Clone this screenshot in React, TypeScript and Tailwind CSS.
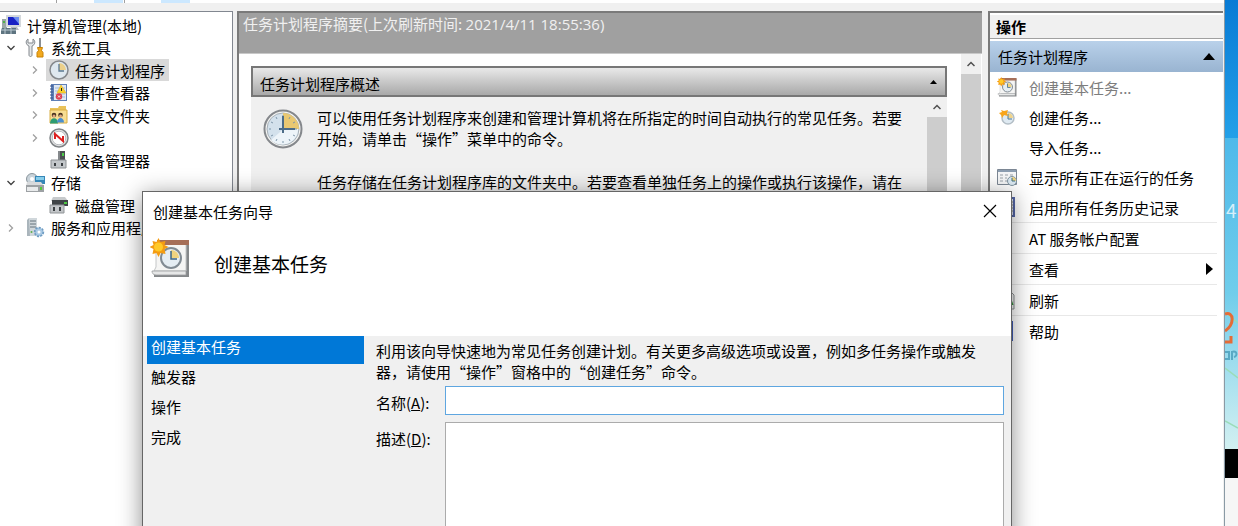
import { clsx } from "clsx";
import type { ReactNode } from "react";

function ComputerIcon() {
  return (
    <svg className="h-5 w-5" viewBox="0 0 20 20">
      <path d="M1 4h5v9H1z" fill="#9aa7a6" />
      <path d="M2 6h2v2H2z" fill="#4fb04a" />
      <path d="M5 0h15v12H5z" fill="#d4d8dc" />
      <path d="M7 2h11v8H7z" fill="#1a22c4" />
      <path d="M12 2h6v7z" fill="#6c8df0" />
      <path d="M10 12h6l2 3H9z" fill="#b9bcc0" />
      <path d="M1 13h14v6H0v-4z" fill="#5e7480" />
      <path d="M0 15h15M4 13v6M10 13v6" stroke="#bccad2" />
    </svg>
  );
}

function ToolsIcon() {
  return (
    <svg className="h-5 w-5" viewBox="0 0 20 20">
      <path d="M3 1C0 3 1 7 4 8v9c0 2 3 2 3 0V8c3-1 4-5 1-7v4H3z" fill="#e4e7e9" stroke="#84898e" />
      <path d="M14 0h2v10h-2z" fill="#8a8f93" />
      <path d="M12.500 9.500h5l-1 3 1.500 2v4.500h-6v-4.500l1.500-2z" fill="#f2a91e" stroke="#c98204" />
    </svg>
  );
}

function ClockIcon({ className = "h-5 w-5" }: { className?: string }) {
  return (
    <svg className={className} viewBox="0 0 40 40">
      <circle cx="20" cy="20" r="18.5" fill="#f4f4f2" stroke="#85888c" strokeWidth="2" />
      <circle cx="20" cy="20" r="16" fill="#d3e1ec" stroke="#a8b0b7" />
      <path d="M8 31a16 16 0 0 0 24-21z" fill="#edf4f9" />
      <path d="M20 20V4a16 16 0 0 1 16 16z" fill="#e9c872" />
      <path
        d="M20 6v2M6 20h2M20 34v-2M34 20h-2M13 8l1 2M27 8l-1 2M8 13l2 1M32 13l-2 1M8 27l2-1M32 27l-2-1M13 32l1-2M27 32l-1-2"
        stroke="#7f97aa"
      />
      <path d="M20 7v17M16 20h16" stroke="#4c6c88" strokeWidth="2" />
    </svg>
  );
}

function SmallClockIcon() {
  return (
    <svg className="h-5 w-5" viewBox="0 0 20 20">
      <circle cx="10" cy="10" r="9" fill="#dfe8ef" stroke="#85888c" strokeWidth="1.5" />
      <path d="M10 10V3a7 7 0 0 1 7 7z" fill="#ecd08a" />
      <path d="M10 4v7h5" fill="none" stroke="#5b7890" strokeWidth="1.3" />
    </svg>
  );
}

function EventIcon() {
  return (
    <svg className="h-5 w-5" viewBox="0 0 20 20">
      <path d="M2 1h16v17H2z" fill="#5d7fb6" />
      <path d="M5 2h12v15H5z" fill="#dfe8f4" />
      <path d="M6 5h10M6 8h10M6 11h10M6 14h10" stroke="#a5b9d6" />
      <path d="M1 3h3M1 6h3M1 9h3M1 12h3M1 15h3" stroke="#37538a" />
      <path d="m12 2 5 8H8z" fill="#fbd32b" stroke="#e0b020" strokeWidth="0.6" />
      <path d="M12.500 5v3" stroke="#222" />
      <circle cx="10" cy="13.5" r="3.2" fill="#dd4050" />
      <path d="m9 12.500 2 2m0-2-2 2" stroke="#fff" strokeWidth="0.9" />
    </svg>
  );
}

function SharedIcon() {
  return (
    <svg className="h-5 w-5" viewBox="0 0 20 20">
      <path d="M1 3h8l1-2h7v15H1z" fill="#e9c25a" />
      <path d="M1 5h17v13H1z" fill="#f7dd92" stroke="#d9ae45" />
      <circle cx="5" cy="10" r="2.3" fill="#4a3320" />
      <circle cx="11.5" cy="10" r="2.3" fill="#4a3320" />
      <circle cx="5" cy="11" r="1.5" fill="#dca77f" />
      <circle cx="11.5" cy="11" r="1.5" fill="#dca77f" />
      <path d="M1 18.500c0-7 8-7 8 0z" fill="#2d9c72" />
      <path d="M8 17.500c0-6 7-6 7 0z" fill="#4a8fd0" />
    </svg>
  );
}

function PerformanceIcon() {
  return (
    <svg className="h-5 w-5" viewBox="0 0 20 20">
      <circle cx="10" cy="10" r="9" fill="#e6e6e6" stroke="#7f8386" strokeWidth="1.5" />
      <circle cx="10" cy="10" r="6.8" fill="#fff" stroke="#b7bbbe" />
      <path d="M6 11V6l8 7V8" fill="none" stroke="#dd2020" strokeWidth="2" />
    </svg>
  );
}

function DeviceIcon() {
  return (
    <svg className="h-5 w-5" viewBox="0 0 20 20">
      <path d="M9 1h7v11H9z" fill="#4b4f52" />
      <path d="M13 3h2v3h-2z" fill="#4ecb4a" />
      <path d="M2 10h15v8H2z" fill="#c3c7ca" stroke="#8d9194" />
      <path d="M5 13h2v3H5zM12 13h2v3h-2z" fill="#3b3f42" />
      <path d="M9 1h2v9H9z" fill="#85898c" />
    </svg>
  );
}

function StorageIcon() {
  return (
    <svg className="h-5 w-5" viewBox="0 0 20 20">
      <circle cx="7" cy="6" r="5.5" fill="#c9d3da" stroke="#8b969d" />
      <circle cx="7" cy="6" r="2" fill="#fff" />
      <path d="M10 3h10v8H10z" fill="#3687b8" />
      <path d="M11 4h8v3h-8z" fill="#87cdea" />
      <path d="M2 9h14l3 4H1z" fill="#d8dadc" />
      <path d="M1 12h18v7H1z" fill="#9da1a4" />
      <path d="M2 14h11v4H2z" fill="#e8eaeb" />
      <path d="M15 14h2v3h-2z" fill="#55cc39" />
    </svg>
  );
}

function DiskIcon() {
  return (
    <svg className="h-5 w-5" viewBox="0 0 20 20">
      <path d="M4 2h12l3 4H2z" fill="#c7cacc" />
      <path d="M3 5h16v6H3z" fill="#3f4346" />
      <path d="M15 7h3v2h-3z" fill="#4ec944" />
      <path d="M1 10h14v8H1z" fill="#c2c5c8" stroke="#909497" />
      <path d="M4 12h2v4H4zM10 12h2v4h-2z" fill="#3c4043" />
    </svg>
  );
}

function ServicesIcon() {
  return (
    <svg className="h-5 w-5" viewBox="0 0 20 20">
      <path d="M4 0h8v18H2V2z" fill="#aab5bc" />
      <path d="M4 0h8v18H5z" fill="#d0d7db" />
      <path d="M5 3h6M5 6h6M5 9h6" stroke="#65737d" />
      <circle cx="6.5" cy="14" r="1" fill="#5cae4c" />
      <circle cx="14" cy="14" r="4" fill="#9fc3e2" stroke="#6f9cc2" strokeWidth="2.400" strokeDasharray="2 1" />
      <circle cx="14" cy="14" r="3.4" fill="#a9c9e4" />
      <circle cx="14" cy="14" r="1.5" fill="#fff" />
    </svg>
  );
}

function BasicTaskIcon({ className = "h-5 w-5" }: { className?: string }) {
  return (
    <svg className={className} viewBox="0 0 40 40">
      <path d="M8 3h31v36H4v-4h4z" fill="#85888a" />
      <path d="M6 6h30v27H4l2-4z" fill="#f5f5f4" stroke="#c4c6c7" />
      <path d="M7 2h32v5H7z" fill="#a66f58" />
      <path d="M2 33h34v4H6c-3 0-4-2-4-4z" fill="#e6e7e7" stroke="#9b9d9e" strokeWidth="0.8" />
      <circle cx="21" cy="20" r="10" fill="#e5edf3" stroke="#818b93" strokeWidth="2" />
      <path d="M21 20v-8a8 8 0 0 1 8 8z" fill="#efd37f" />
      <path d="M21 13v8h6" fill="none" stroke="#3c6585" strokeWidth="1.5" />
      <path d="m8.500 0 2 4 5-1-1 4 4 2-4 2 1 5-5-1-2 4-2-4-4 1 1-5-4-2 4-2-1-4 4 1z" fill="#f49c12" />
      <circle cx="8.500" cy="9" r="4.5" fill="#ffc928" />
    </svg>
  );
}

function NewTaskIcon() {
  return (
    <svg className="h-5 w-5" viewBox="0 0 20 20">
      <circle cx="11" cy="11" r="6" fill="#dfeaf2" stroke="#b3bec6" strokeWidth="1.5" />
      <path d="M11 11V6a5 5 0 0 1 5 5z" fill="#f0d48c" />
      <path d="M11 7v5h4" fill="none" stroke="#4c7899" />
      <path d="m4 3 3 1 4-1-1 3 1 3-4-1-2 3-1-3-2-2 3-1z" fill="#f8a51b" />
    </svg>
  );
}

function RunningIcon() {
  return (
    <svg className="h-5 w-5" viewBox="0 0 20 20">
      <path d="M.5 2.500h19v15H.5z" fill="#f5f6f7" stroke="#7c8794" />
      <path d="M1 3h18v2H1z" fill="#8c9db0" />
      <path d="M3 8h3m2 0h3m2 0h3M3 11h3m2 0h2M3 14h3m2 0h2" stroke="#9aa1a8" />
      <circle cx="15" cy="14" r="4.5" fill="#dbe9f2" stroke="#7f939f" />
      <path d="M15 14v-4a4 4 0 0 1 4 4z" fill="#efd37f" />
      <path d="M15 11v3h3" fill="none" stroke="#3c7184" />
    </svg>
  );
}

function HistoryIcon() {
  return (
    <svg className="h-5 w-5" viewBox="0 0 20 20">
      <path d="M1 1h16v18H1z" fill="#d9dff0" stroke="#5365a5" strokeWidth="2" />
      <path d="M4 5h12M4 8h12M4 11h12M4 14h12" stroke="#8c846f" />
    </svg>
  );
}

function RefreshIcon() {
  return (
    <svg className="h-5 w-5" viewBox="0 0 20 20">
      <path d="M1 1h12l4 4v14H1z" fill="#f5f5f5" stroke="#8d9192" />
      <path d="M5 9a5 5 0 0 1 8-2l2-1v5h-5l1-2M14 12a5 5 0 0 1-8 3l-2 1v-5h5" fill="#3a9e37" />
      <path d="m14 8 2.500 7h-3z" fill="#2f9437" />
    </svg>
  );
}

function HelpIcon() {
  return (
    <svg className="h-5 w-5" viewBox="0 0 20 20">
      <path d="M1 0h15v20H1z" fill="#3f5cb8" />
      <text x="5" y="15" fill="#fff" fontSize="14">?</text>
    </svg>
  );
}

type TreeNode = {
  label: string;
  level: 0 | 1 | 2;
  icon: ReactNode;
  state?: "open" | "closed";
  selected?: boolean;
};

const tree: TreeNode[] = [
  { label: "计算机管理(本地)", level: 0, icon: <ComputerIcon /> },
  { label: "系统工具", level: 1, icon: <ToolsIcon />, state: "open" },
  { label: "任务计划程序", level: 2, icon: <SmallClockIcon />, state: "closed", selected: true },
  { label: "事件查看器", level: 2, icon: <EventIcon />, state: "closed" },
  { label: "共享文件夹", level: 2, icon: <SharedIcon />, state: "closed" },
  { label: "性能", level: 2, icon: <PerformanceIcon />, state: "closed" },
  { label: "设备管理器", level: 2, icon: <DeviceIcon /> },
  { label: "存储", level: 1, icon: <StorageIcon />, state: "open" },
  { label: "磁盘管理", level: 2, icon: <DiskIcon /> },
  { label: "服务和应用程序", level: 1, icon: <ServicesIcon />, state: "closed" },
];

const actions: { label: string; icon?: ReactNode; disabled?: boolean; divided?: boolean; submenu?: boolean }[] = [
  { label: "创建基本任务...", icon: <BasicTaskIcon />, disabled: true },
  { label: "创建任务...", icon: <NewTaskIcon /> },
  { label: "导入任务..." },
  { label: "显示所有正在运行的任务", icon: <RunningIcon /> },
  { label: "启用所有任务历史记录", icon: <HistoryIcon /> },
  { label: "AT 服务帐户配置", divided: true },
  { label: "查看", divided: true, submenu: true },
  { label: "刷新", icon: <RefreshIcon />, divided: true },
  { label: "帮助", icon: <HelpIcon />, divided: true },
];

const steps = ["创建基本任务", "触发器", "操作", "完成"];

function Expander({ state }: { state?: "open" | "closed" }) {
  return (
    <span className="flex w-[22px] shrink-0 justify-center">
      {state ? (
        <svg className="h-2.5 w-2.5" viewBox="0 0 10 10" fill="none" strokeWidth="1.3">
          {state === "open" ? <path d="m1.500 3 3.500 3.500L8.500 3" stroke="#404040" /> : <path d="M3 1.500 6.500 5 3 8.500" stroke="#a0a0a0" />}
        </svg>
      ) : null}
    </span>
  );
}

function TreePane() {
  return (
    <nav className="w-[233px] shrink-0 border-t border-r border-[#828790] bg-white pt-0.5">
      <ul className="flex h-[225px] flex-col">
        {tree.map((node) => (
          <li key={node.label} className={clsx("flex flex-1 items-center", node.level === 2 && "pl-6")}>
            {node.level > 0 ? <Expander state={node.state} /> : null}
            <button
              className={clsx(
                "flex h-[22px] items-center gap-1.5 whitespace-nowrap pr-1",
                node.level > 0 ? "pl-[3px]" : "pl-px",
                node.selected && "bg-[#d9d9d9]",
              )}
              type="button"
            >
              {node.icon}
              {node.label}
            </button>
          </li>
        ))}
      </ul>
    </nav>
  );
}

function ScrollBar() {
  return (
    <div className="flex w-5 shrink-0 flex-col bg-[#cdcdcd]">
      <button aria-label="向上滚动" className="flex h-5 items-center justify-center bg-[#f0f0f0]" type="button">
        <svg className="h-2 w-2" viewBox="0 0 8 8" fill="none">
          <path d="M.5 6 4 2.500 7.500 6" stroke="#505050" strokeWidth="1.5" />
        </svg>
      </button>
    </div>
  );
}

function SummaryPane() {
  return (
    <main className="ml-1 flex min-w-0 flex-1 flex-col border-t-2 border-l-2 border-[#7a7a7a] bg-white">
      <h1 className="h-10 shrink-0 bg-[#a0a0a0] pl-1 text-[#f0f0f0]">
        任务计划程序摘要(上次刷新时间: <span className="font-['Open_Sans',sans-serif]">2021/4/11 18:55:36)</span>
      </h1>
      <div className="flex min-h-0 flex-1 border-t border-[#c8c8c8] pr-px">
        <section className="mt-3 mr-[14px] ml-3 flex min-w-0 flex-1 flex-col">
          <header className="flex h-[31px] shrink-0 items-center justify-between border-2 border-[#777777] bg-linear-to-b from-[#e9e9e9] to-[#a9a9a9] pt-1 pr-2 pl-[7px]">
            <h2>任务计划程序概述</h2>
            <button aria-label="折叠" className="pb-1" type="button">
              <svg className="h-1 w-[7px]" viewBox="0 0 7 4">
                <path d="M0 4 3.500 0 7 4z" />
              </svg>
            </button>
          </header>
          <div className="flex min-h-0 flex-1 bg-[#f0f0f0]">
            <ClockIcon className="mt-3 ml-3 h-10 w-10 shrink-0" />
            <div className="mt-2.5 mr-5 ml-3.5 flex-1 overflow-hidden">
              <p>可以使用任务计划程序来创建和管理计算机将在所指定的时间自动执行的常见任务。若要开始，请单击“操作”菜单中的命令。</p>
              <p className="mt-[22px]">任务存储在任务计划程序库的文件夹中。若要查看单独任务上的操作或执行该操作，请在</p>
            </div>
            <ScrollBar />
          </div>
        </section>
        <ScrollBar />
      </div>
    </main>
  );
}

function ActionsPane() {
  return (
    <aside className="mr-px ml-1.5 w-[235px] shrink-0 border-t-2 border-l-2 border-[#7a7a7a] bg-white">
      <h2 className="mt-0.5 flex h-6 items-center border-b border-[#a0a0a0] bg-[#f0f0f0] pl-1.5 font-bold">操作</h2>
      <button
        className="mt-0.5 flex h-[31px] w-full items-center justify-between bg-linear-to-b from-[#b9d1ea] to-[#99b4d1] pr-2 pl-2"
        type="button"
      >
        任务计划程序
        <svg className="h-[7px] w-3" viewBox="0 0 12 7">
          <path d="M0 7 6 0l6 7z" />
        </svg>
      </button>
      <ul className="pr-1.5">
        {actions.map((action) => (
          <li key={action.label} className={clsx(action.divided && "border-t border-[#e8e8e8]")}>
            <button
              className={clsx("flex h-[30px] w-full items-center gap-3 pl-[7px]", action.disabled && "text-[#7d7d7d]")}
              disabled={action.disabled}
              type="button"
            >
              <span className="h-5 w-5 shrink-0">{action.icon}</span>
              {action.label}
              {action.submenu ? (
                <svg className="mr-1 ml-auto h-3 w-[7px]" viewBox="0 0 7 12">
                  <path d="m0 0 7 6-7 6z" />
                </svg>
              ) : null}
            </button>
          </li>
        ))}
      </ul>
    </aside>
  );
}

function WizardDialog() {
  return (
    <div
      aria-labelledby="wizard-title"
      className="absolute top-[191px] right-[226px] -bottom-10 left-[142px] flex flex-col border border-[#666666] bg-[#f0f0f0] shadow-[0_4px_22px_rgba(0,0,0,0.45)]"
      role="dialog"
    >
      <div className="h-36 shrink-0 bg-white">
        <div className="flex h-[38px] items-center justify-between pr-[14px] pl-2.5">
          <h2 id="wizard-title">创建基本任务向导</h2>
          <button aria-label="关闭" type="button">
            <svg className="h-[14px] w-[14px]" viewBox="0 0 14 14">
              <path d="m1 1 12 12M13 1 1 13" stroke="#000" strokeWidth="1.2" />
            </svg>
          </button>
        </div>
        <div className="flex items-center gap-6 pt-2 pl-[7px]">
          <BasicTaskIcon className="h-10 w-10" />
          <h3 className="pt-2.5 text-[19px]">创建基本任务</h3>
        </div>
      </div>
      <div className="flex min-h-0 flex-1 gap-3 pr-[7px] pl-1">
        <ol className="w-[217px] shrink-0 space-y-0.5">
          {steps.map((step, i) => (
            <li key={step}>
              <button
                className={clsx("flex h-7 w-full items-start pl-1", i === 0 && "bg-[#0078d7] text-white")}
                type="button"
              >
                {step}
              </button>
            </li>
          ))}
        </ol>
        <form className="flex min-w-0 flex-1 flex-col pt-1">
          <p className="pr-4">
            利用该向导快速地为常见任务创建计划。有关更多高级选项或设置，例如多任务操作或触发器，请使用“操作”窗格中的“创建任务”命令。
          </p>
          <div className="mt-1 flex">
            <label className="w-[69px] shrink-0 pt-1.5" htmlFor="task-name">
              名称(<u>A</u>):
            </label>
            <input
              className="h-[29px] min-w-0 flex-1 border border-[#5ea6e0] bg-white px-1 outline-none"
              id="task-name"
              type="text"
            />
          </div>
          <div className="mt-[7px] flex flex-1">
            <label className="w-[69px] shrink-0 pt-1.5" htmlFor="task-description">
              描述(<u>D</u>):
            </label>
            <textarea
              className="min-w-0 flex-1 resize-none border border-[#ababab] bg-white px-1 outline-none"
              id="task-description"
            />
          </div>
        </form>
      </div>
    </div>
  );
}

function DesktopStrip() {
  return (
    <div className="flex w-[13px] shrink-0 flex-col">
      <div className="h-[138px] bg-linear-to-b from-[#087bd5] to-[#23a0e8]" />
      <div className="h-[311px] bg-linear-to-b from-[#4db9ea] via-[#70cdeb] to-[#d2f0f1]">
        <svg className="h-full w-full" viewBox="0 0 13 311" fill="none">
          <text x="1" y="80" fill="#d5effa" fontSize="19">4</text>
          <path d="m0 174 13 11M0 230l13 10M0 283l13 7" stroke="#9bdcb9" strokeWidth="1.5" />
          <path d="M0 176c9-3 10 10 0 17M0 204h6v-6" stroke="#e46c38" strokeWidth="3" />
          <path d="M0 214h4v7H0m7-8v9m0-8c5-2 6 4 2 5" stroke="#58a9c4" strokeWidth="2" />
        </svg>
      </div>
      <div className="h-[29px] bg-black" />
      <div className="flex-1 bg-[#f6f6f6]" />
    </div>
  );
}

export default function App() {
  return (
    <div className="relative flex h-screen overflow-hidden bg-white font-['Noto_Sans_CJK_SC',sans-serif] text-[15px] leading-[21px] text-black">
      <div className="flex min-w-0 flex-1 flex-col border-r border-[#8a9aa5] bg-[#f0f0f0]">
        <div className="mb-2 flex h-[3px] shrink-0 bg-white">
          <span className="ml-14 w-px bg-[#a0a0a0]" />
          <span className="ml-[37px] w-[29px] bg-[#cce8ff]" />
          <span className="ml-px w-px bg-[#a0a0a0]" />
          <span className="ml-9 w-[29px] bg-[#cce8ff]" />
        </div>
        <div className="flex min-h-0 flex-1">
          <TreePane />
          <SummaryPane />
          <ActionsPane />
        </div>
      </div>
      <DesktopStrip />
      <WizardDialog />
    </div>
  );
}
